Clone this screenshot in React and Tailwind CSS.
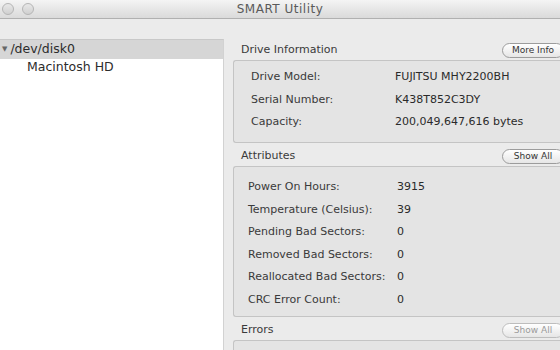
import React from "react";

function Light() {
  return (
    <div className="w-[12px] h-[12px] rounded-full border border-[#b5b5b5] bg-gradient-to-b from-[#e8e8e8] to-[#d0d0d0]" />
  );
}

function PillButton({ children, dim }) {
  return (
    <div
      className={`h-[15px] w-[62px] rounded-full border bg-gradient-to-b from-[#ffffff] to-[#e6e6e6] flex items-center justify-center text-[9px] leading-none ${
        dim ? "text-[#9a9a9a] border-[#bdbdbd]" : "text-[#333] border-[#9c9c9c]"
      }`}
    >
      {children}
    </div>
  );
}

function Row({ label, value, lw }) {
  return (
    <div className="flex h-[22.5px] items-center">
      <div className={`${lw} text-[#3a3a3a]`}>{label}</div>
      <div className="text-[#2a2a2a]">{value}</div>
    </div>
  );
}

function Section({ title, button, dim, children, boxClass }) {
  return (
    <div className="flex flex-col">
      <div className="flex items-center justify-between h-[18px] pl-[8px]">
        <span className="text-[#3a3a3a]">{title}</span>
        <div className="-mr-[4px]">
          <PillButton dim={dim}>{button}</PillButton>
        </div>
      </div>
      <div
        className={`mt-[1px] border border-[#c4c4c4] border-r-0 bg-[#e4e4e4] rounded-l-[3px] ${boxClass}`}
      >
        {children}
      </div>
    </div>
  );
}

export default function App() {
  const A = "w-[149px]";
  const I = "w-[144px]";
  return (
    <div
      className="w-[560px] h-[350px] overflow-hidden bg-[#ebebeb] flex flex-col text-[11px]"
      style={{ fontFamily: '"DejaVu Sans", "Liberation Sans", sans-serif' }}
    >
      {/* Title bar */}
      <div className="h-[20px] flex items-center border-b border-[#b0b0b0] bg-gradient-to-b from-[#f4f4f4] to-[#dadada]">
        <div className="flex gap-[8px] pl-[2px] w-[60px]">
          <Light />
          <Light />
        </div>
        <div className="flex-1 text-center text-[12px] text-[#5a5a5a] tracking-[0.5px]">
          SMART Utility
        </div>
        <div className="w-[60px]" />
      </div>

      <div className="flex flex-1 pt-[20px]">
        {/* Sidebar */}
        <div className="w-[224px] bg-white border-t border-[#c8c8c8] border-r border-r-[#d2d2d2] flex flex-col">
          <div className="h-[19px] bg-[#d6d6d6] flex items-center pl-[2px] text-[#2c2c2c]">
            <span className="text-[7px] text-[#666] mr-[3px]">▼</span>
            <span className="text-[12.5px]">/dev/disk0</span>
          </div>
          <div className="h-[17px] flex items-center pl-[27px] text-[12.5px] text-[#2c2c2c]">
            Macintosh HD
          </div>
        </div>

        {/* Right panel */}
        <div className="flex-1 pl-[9px] flex flex-col mt-[2px]">
          <Section title="Drive Information" button="More Info" boxClass="h-[83px] pt-[5px] pl-[17px]">
            <Row lw={I} label="Drive Model:" value="FUJITSU MHY2200BH" />
            <Row lw={I} label="Serial Number:" value="K438T852C3DY" />
            <Row lw={I} label="Capacity:" value="200,049,647,616 bytes" />
          </Section>
          <div className="h-[4px]" />
          <Section title="Attributes" button="Show All" boxClass="h-[151px] pt-[9px] pl-[14px]">
            <Row lw={A} label="Power On Hours:" value="3915" />
            <Row lw={A} label="Temperature (Celsius):" value="39" />
            <Row lw={A} label="Pending Bad Sectors:" value="0" />
            <Row lw={A} label="Removed Bad Sectors:" value="0" />
            <Row lw={A} label="Reallocated Bad Sectors:" value="0" />
            <Row lw={A} label="CRC Error Count:" value="0" />
          </Section>
          <div className="h-[4px]" />
          <Section title="Errors" button="Show All" dim boxClass="h-[40px]" />
        </div>
      </div>
    </div>
  );
}
